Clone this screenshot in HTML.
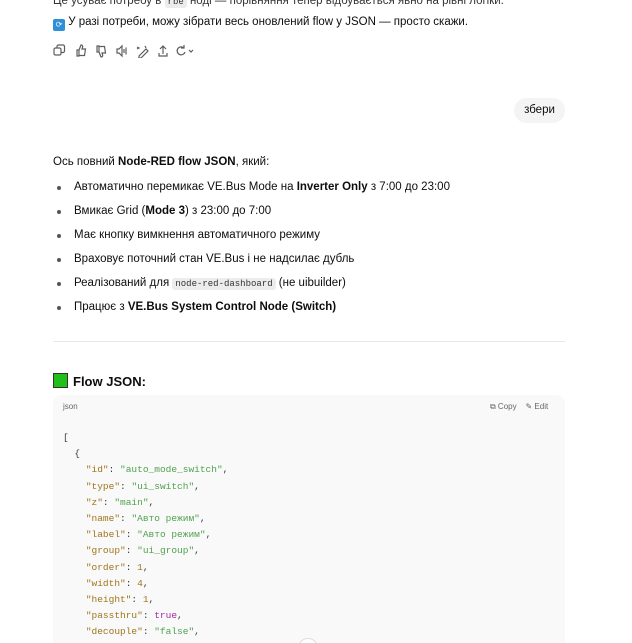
<!DOCTYPE html>
<html><head><meta charset="utf-8"><style>
*{margin:0;padding:0;box-sizing:border-box}
html,body{width:632px;height:643px;overflow:hidden}
body{background:#fff;font-family:"Liberation Sans","DejaVu Sans",sans-serif;font-size:11.5px;color:#0d0d0d;position:relative}
.a{position:absolute;white-space:nowrap}
.ic{fill:none;stroke:#5d5d5d;stroke-width:1.2}
code{font-family:"Liberation Mono",monospace;font-size:9px;background:#ececec;border-radius:3px;padding:1px 3px;color:#333}
ul{position:absolute;left:53px;top:180px;list-style:none}
li{height:24px;line-height:14px;padding-left:21px;position:relative;white-space:nowrap}
li:before{content:"";position:absolute;left:4px;top:6px;width:4px;height:4px;border-radius:50%;background:#555}
b{font-weight:bold}
.code{position:absolute;left:53px;top:395px;width:512px;height:260px;background:#f9f9f9;border-radius:8px}
pre{position:absolute;left:63px;top:430px;font-family:"Liberation Mono",monospace;font-size:9.5px;line-height:16.2px;color:#383a42}
.k{color:#a0741c}.s{color:#50a14f}.n{color:#a0741c}.t{color:#a626a4}
</style></head><body>
<div class="a" style="left:53px;top:-5px;color:#333">Це усуває потребу в <code>rbe</code> ноді — порівняння тепер відбувається явно на рівні логіки.</div>
<div class="a" style="left:53px;top:16px"><span style="display:inline-block;width:12px;height:12px;background:#2f8fd8;border-radius:2px;color:#fff;font-size:8px;text-align:center;line-height:12px;vertical-align:-2px">⟳</span> У разі потреби, можу зібрати весь оновлений flow у JSON — просто скажи.</div>
<svg class="a" style="left:53px;top:44px" width="160" height="14">
<g class="ic"><rect x="1" y="4" width="7" height="7" rx="1.5"/><path d="M4 4V2.5A1.5 1.5 0 0 1 5.5 1H10A1.5 1.5 0 0 1 11.5 2.5V7A1.5 1.5 0 0 1 10 8.5H8"/>
<path d="M24 6h2v6h-2zM26 6l2-5c1.5 0 2 1 1.5 2.5L29 5h3.5l-1 6.5H26"/>
<path d="M44 8h2V2h-2zM46 8l2 5c1.5 0 2-1 1.5-2.5L49 9h3.5l-1-6.5H46"/>
<path d="M64 5h2l3-3v10l-3-3h-2zM71 5v4M73 3.5v7"/>
<path d="M86 12l7-7 2 2-7 7h-2zM84 3l2 1-2 1M92 2l1 2"/>
<path d="M106 9v3h8V9M110 10V2M107 5l3-3 3 3"/>
<path d="M131 4a4 4 0 1 0 1 4M131 1v3h-3M136 6l2 2 2-2"/></g></svg>
<div class="a" style="left:514px;top:98px;width:51px;height:25px;background:#f4f4f4;border-radius:13px;text-align:center;line-height:25px">збери</div>
<div class="a" style="left:53px;top:156px">Ось повний <b>Node-RED flow JSON</b>, який:</div>
<ul>
<li>Автоматично перемикає VE.Bus Mode на <b>Inverter Only</b> з 7:00 до 23:00</li>
<li>Вмикає Grid (<b>Mode 3</b>) з 23:00 до 7:00</li>
<li>Має кнопку вимкнення автоматичного режиму</li>
<li>Враховує поточний стан VE.Bus і не надсилає дубль</li>
<li>Реалізований для <code>node-red-dashboard</code> (не uibuilder)</li>
<li>Працює з <b>VE.Bus System Control Node (Switch)</b></li>
</ul>
<div class="a" style="left:53px;top:341px;width:512px;height:1px;background:#e8e8e8"></div>
<div class="a" style="left:53px;top:373px;font-size:13px;font-weight:bold"><span style="display:inline-block;width:15px;height:15px;background:#1fc01a;border:1px solid #333;vertical-align:-2px;margin-right:5px"></span>Flow JSON:</div>
<div class="code"></div>
<div class="a" style="left:63px;top:402px;font-size:8px;color:#666">json</div>
<div class="a" style="left:490px;top:402px;font-size:8px;color:#666">⧉ Copy &nbsp;&nbsp; ✎ Edit</div>
<pre>[
  {
    <span class="k">"id"</span>: <span class="s">"auto_mode_switch"</span>,
    <span class="k">"type"</span>: <span class="s">"ui_switch"</span>,
    <span class="k">"z"</span>: <span class="s">"main"</span>,
    <span class="k">"name"</span>: <span class="s">"Авто режим"</span>,
    <span class="k">"label"</span>: <span class="s">"Авто режим"</span>,
    <span class="k">"group"</span>: <span class="s">"ui_group"</span>,
    <span class="k">"order"</span>: <span class="n">1</span>,
    <span class="k">"width"</span>: <span class="n">4</span>,
    <span class="k">"height"</span>: <span class="n">1</span>,
    <span class="k">"passthru"</span>: <span class="t">true</span>,
    <span class="k">"decouple"</span>: <span class="s">"false"</span>,
</pre>
<div class="a" style="left:298px;top:638px;width:20px;height:20px;border-radius:50%;border:1px solid #ddd;background:#fff"></div>
</body></html>
